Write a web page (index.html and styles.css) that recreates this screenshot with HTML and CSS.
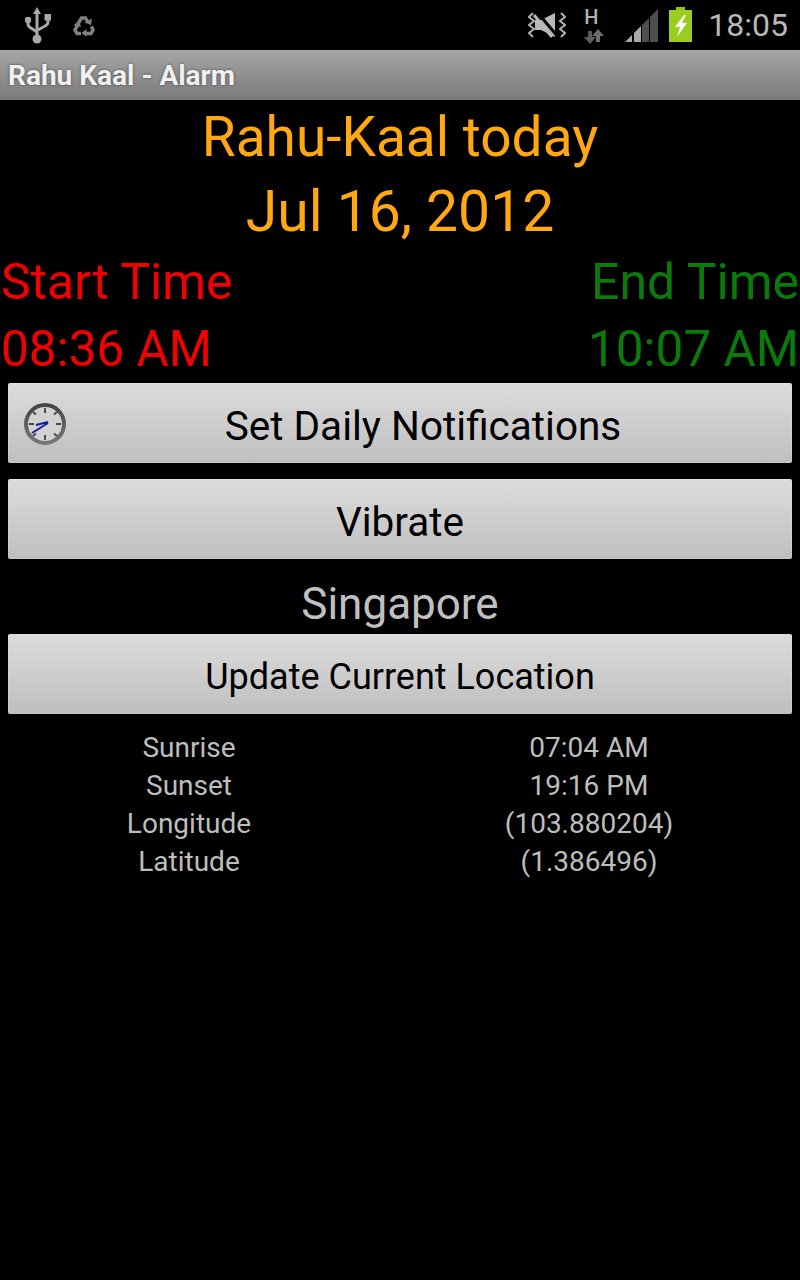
FILE: index.html
```html
<!DOCTYPE html>
<html lang="en">
<head>
    <meta charset="UTF-8">
    <meta name="viewport" content="width=device-width, initial-scale=1.0">
    <title>Rahu Kaal - Alarm</title>
    <link rel="stylesheet" href="styles.css">
</head>
<body>
    <div class="status-bar">
        <div class="status-left">
            <svg class="icon-usb" width="26" height="37" viewBox="0 0 26 37">
                <path d="M12 0l-4 7h2.500v22h3V7H16z" fill="#a8a8a8"/>
                <circle cx="12" cy="32" r="4.500" fill="#a8a8a8"/>
                <path d="M3 14v3c0 2 1 3 3 4l6 4M23 13v2c0 2-1 3-3 4l-7 4" fill="none" stroke="#a8a8a8" stroke-width="3"/>
                <circle cx="3" cy="13" r="3.200" fill="#a8a8a8"/>
                <rect x="19.500" y="7" width="6.500" height="6.500" fill="#a8a8a8"/>
            </svg>
            <svg class="icon-recycle" width="22" height="20" viewBox="0 0 22 20">
                <path d="M5.500 7L8.500 2h4l2 3.500" fill="none" stroke="#808080" stroke-width="3.500"/>
                <path d="M11.500 6.500l6.500 2.500 1-6.500z" fill="#808080"/>
                <path d="M8 17.500H4L2 14l2.500-4.500" fill="none" stroke="#808080" stroke-width="3.500"/>
                <path d="M0.500 9.500l7.500 1.500-2-6.500z" fill="#808080"/>
                <path d="M18.500 10.500l1.500 3.500-2 3.500h-5" fill="none" stroke="#808080" stroke-width="3.500"/>
                <path d="M13.500 13v8l-5-4z" fill="#808080"/>
            </svg>
        </div>
        <div class="status-right">
            <svg class="icon-mute" width="38" height="26" viewBox="0 0 38 26">
                <path d="M7 8h6L27 1v24l-14-7H7z" fill="#b8b8b8"/>
                <path d="M9 0l22 26" stroke="#000" stroke-width="3"/>
                <path d="M6 3l18 22" stroke="#b8b8b8" stroke-width="3"/>
                <path d="M5 1L1 5l5 4-5 4 5 4-5 4 4 4M33 1l4 4-5 4 5 4-5 4 5 4-4 4" fill="none" stroke="#b0b0b0" stroke-width="2"/>
            </svg>
            <div class="net-type">
                <span class="net-letter">H</span>
                <svg width="20" height="15" viewBox="0 0 20 15">
                    <path d="M6 15L0 8h4V2h4v6h4z" fill="#5c5c5c"/>
                    <path d="M14 0l6 7h-4v6h-4V7H8z" fill="#6e6e6e"/>
                </svg>
            </div>
            <svg class="icon-signal" width="33" height="33" viewBox="0 0 33 33">
                <path d="M0 33l7-7v7z" fill="#a8a8a8"/>
                <path d="M9 24l7-7v16H9z" fill="#a8a8a8"/>
                <path d="M17 16l7-7v24h-7z" fill="#4e4e4e"/>
                <path d="M25 8l8-8v33h-8z" fill="#4e4e4e"/>
            </svg>
            <svg class="icon-battery" width="23" height="35" viewBox="0 0 23 35">
                <rect x="7" y="0" width="9" height="3" fill="#8fc31f"/>
                <rect x="0" y="3" width="23" height="32" fill="#9acd1e"/>
                <path d="M15 8L6 20h5l-3 10 10-14h-5l4-8z" fill="#fff"/>
            </svg>
            <span class="clock">18:05</span>
        </div>
    </div>
    <div class="title-bar">Rahu Kaal - Alarm</div>

    <div class="heading first">Rahu-Kaal today</div>
    <div class="heading date">Jul 16, 2012</div>

    <div class="times">
        <div class="time-col start">
            <div class="time-label">Start Time</div>
            <div class="time-value">08:36 AM</div>
        </div>
        <div class="time-col end">
            <div class="time-label">End Time</div>
            <div class="time-value">10:07 AM</div>
        </div>
    </div>

    <div class="button notify">
        <svg class="icon-clock" width="44" height="44" viewBox="0 0 44 44">
            <defs>
                <linearGradient id="clockRim" x1="0" y1="0" x2="0" y2="1">
                    <stop offset="0" stop-color="#444"/>
                    <stop offset="1" stop-color="#777"/>
                </linearGradient>
            </defs>
            <circle cx="22" cy="22" r="19" fill="#d2d2d2" stroke="url(#clockRim)" stroke-width="4"/>
            <path d="M22 6v5M22 33v5M6 22h5M33 22h5M10 10l3 2.500M34 10l-3 2.500M10 34l3-2.500M34 34l-3-2.500" stroke="#4a4a4a" stroke-width="2"/>
            <path d="M25 20l-12 3M25 21L9 31" stroke="#1a1a9a" stroke-width="2"/>
        </svg>
        <span>Set Daily Notifications</span>
    </div>
    <div class="button">Vibrate</div>
    <div class="location">Singapore</div>
    <div class="button small">Update Current Location</div>

    <div class="details">
        <div>Sunrise</div><div>07:04 AM</div>
        <div>Sunset</div><div>19:16 PM</div>
        <div>Longitude</div><div>(103.880204)</div>
        <div>Latitude</div><div>(1.386496)</div>
    </div>
</body>
</html>
```

FILE: styles.css
```css
html, body {
    height: 100%;
}
body {
    margin: 0;
    background-color: #000;
    font-family: 'Roboto', sans-serif;
    overflow: hidden;
}
.status-bar {
    height: 50px;
    display: flex;
    justify-content: space-between;
    align-items: center;
    background-color: #000;
}
.status-left {
    display: flex;
    align-items: center;
    gap: 22px;
    padding-left: 25px;
}
.icon-recycle {
    margin-top: 2px;
}
.status-right {
    display: flex;
    align-items: center;
    padding-right: 12px;
}
.icon-mute {
    margin-right: 18px;
}
.net-type {
    display: flex;
    flex-direction: column;
    align-items: flex-start;
    width: 20px;
    margin-right: 21px;
    margin-top: 2px;
}
.net-letter {
    color: #b0b0b0;
    font-size: 20px;
    font-weight: 500;
    line-height: 19px;
    margin-bottom: 2px;
}
.icon-signal {
    margin-right: 11px;
    margin-top: 1px;
}
.icon-battery {
    margin-top: -1px;
}
.clock {
    color: #b8b8b8;
    font-size: 32px;
    margin-left: 16px;
}
.title-bar {
    height: 50px;
    line-height: 52px;
    padding-left: 8px;
    font-size: 28px;
    font-weight: bold;
    color: #f0f0f0;
    background: linear-gradient(#a6a6a6, #7a7a7a);
    text-shadow: 0 0 3px #444;
}
.heading {
    text-align: center;
    color: #ffa812;
    font-size: 55px;
    line-height: 73px;
}
.first {
    padding-top: 1px;
    padding-bottom: 1px;
}
.date {
    font-size: 57px;
}
.times {
    display: flex;
    justify-content: space-between;
    margin-bottom: 2px;
    padding: 0 1px;
}
.time-col.end {
    text-align: right;
}
.time-label {
    font-size: 50px;
    line-height: 69px;
}
.time-value {
    font-size: 49.5px;
    line-height: 64px;
}
.start {
    color: #f00000;
}
.end {
    color: #0a7a0a;
}
.button {
    position: relative;
    box-sizing: border-box;
    height: 80px;
    margin: 0 8px 16px;
    padding-top: 5px;
    display: flex;
    align-items: center;
    justify-content: center;
    border-radius: 2px;
    background: linear-gradient(#dcdcdc, #bfbfbf);
    box-shadow: inset 0 0 0 1px rgba(255, 255, 255, 0.12);
    color: #000;
    font-size: 40.500px;
}
.button.small {
    font-size: 36px;
    margin-bottom: 15px;
}
.notify span {
    margin-left: 46px;
}
.icon-clock {
    position: absolute;
    left: 15px;
    top: 19px;
}
.location {
    text-align: center;
    color: #c0c0c0;
    font-size: 44px;
    line-height: 60px;
    margin-top: -1px;
}
.details {
    display: grid;
    grid-template-columns: 378px 1fr;
    grid-auto-rows: 38px;
    text-align: center;
    color: #bdbdbd;
    font-size: 28px;
    line-height: 38px;
}
```
